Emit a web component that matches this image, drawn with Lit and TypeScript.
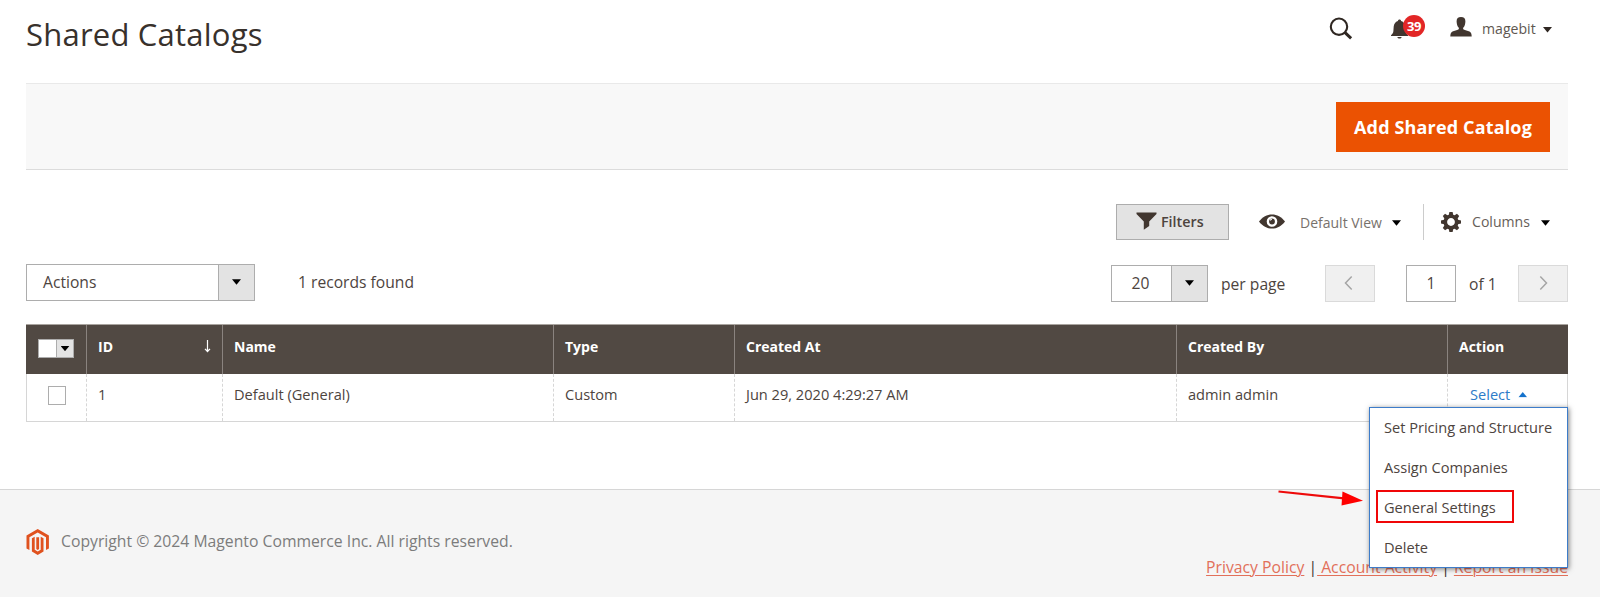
import { LitElement, html, css, svg } from "lit";
import { customElement } from "lit/decorators.js";

const caret = html`<i class="caret"></i>`;

// Gear outline: eight trapezoid teeth around a ring.
const teeth = [0, 45, 90, 135, 180, 225, 270, 315];

@customElement("app-root")
export class AppRoot extends LitElement {
  static styles = css`
    :host {
      display: block;
      position: relative;
      width: 1600px;
      height: 597px;
      overflow: hidden;
      background: #fff;
      color: #4d443e;
      font: 400 15.65px/20px "Open Sans", sans-serif;
    }
    * { box-sizing: border-box; }
    .page { display: flex; flex-direction: column; height: 597px; }
    svg { display: block; flex: none; overflow: visible; }
    .caret {
      display: block; flex: none; width: 9px; height: 5.5px; background: #000;
      clip-path: polygon(0 0, 100% 0, 50% 100%);
    }
    .up { background: #1472cc; transform: scaleY(-1); }
    .head {
      display: flex; justify-content: space-between; height: 83px;
      padding: 0 48px 0 26px;
    }
    h1 {
      margin: 13px 0 0; font-size: 31px; line-height: 42px; font-weight: 400;
      color: #38312c; letter-spacing: 0.22px; white-space: nowrap;
    }
    .tools { display: flex; align-items: flex-start; padding-top: 15px; }
    .search { margin: 2px 38px 0 0; }
    .bell { display: flex; width: 36px; margin-right: 24px; }
    .bell svg { margin-top: 4px; }
    .badge {
      width: 22px; height: 22px; margin: 0 0 0 -4px; border-radius: 11px;
      background: #e22626; color: #fff; font-size: 13px; font-weight: 700;
      line-height: 23px; text-align: center; position: relative; letter-spacing: -0.5px;
    }
    .user { margin: 2px 11px 0 0; }
    .name { margin-top: 4px; width: 61px; font-size: 14.1px; color: #605750; }
    .tools .caret { margin-top: 12px; background: #2f2722; }
    .bar {
      display: flex; justify-content: flex-end; align-items: center; height: 87px;
      margin: 0 32px 0 26px; padding-right: 18px; background: #f8f8f8;
      border-top: 1px solid #e9e9e9; border-bottom: 1px solid #dcdcdc;
    }
    .primary {
      width: 214px; height: 50px; border: 0; padding: 0; background: #eb5202;
      color: #fff; font: 700 18px/50px "Open Sans", sans-serif; letter-spacing: 0.15px;
    }
    .row { display: flex; align-items: center; padding: 0 32px 0 26px; }
    .views { height: 37px; margin-top: 33px; justify-content: flex-end; padding-right: 50px; }
    .filters {
      display: flex; align-items: center; width: 113px; height: 36px; padding: 0 0 0 19px;
      background: #e3e3e3; border: 1px solid #adadad; font-weight: 600; font-size: 14.3px;
    }
    .filters svg { margin-top: -2px; }
    .filters span { margin-left: 4px; }
    .eye { margin-left: 30px; }
    .view { width: 92px; margin-left: 15px; font-size: 14px; color: #77716c; padding-top: 2px; }
    .views .caret { margin-top: 3px; }
    .split { width: 1px; height: 36px; background: #ccc; margin: 0 17px 0 22px; }
    .cols { width: 69px; margin-left: 11px; font-size: 14.1px; color: #665e58; }
    .select {
      display: flex; height: 37px; border: 1px solid #adadad; background: #fff; align-items: center;
    }
    .select b {
      display: flex; align-items: center; justify-content: center; width: 36px; height: 100%;
      background: #e3e3e3; border-left: 1px solid #adadad;
    }
    .select span { flex: 1; }
    .paging { height: 38px; margin-top: 24px; }
    .actions { width: 229px; padding-left: 16px; margin-top: -2px; }
    .actions span { padding-bottom: 1px; }
    .found { margin-left: 43px; flex: 1; padding-bottom: 3px; }
    .size { width: 97px; text-align: center; }
    .size span { padding-right: 2px; }
    .per { width: 104px; margin-left: 13px; padding-top: 1px; }
    .step {
      display: grid; place-items: center; width: 50px; height: 37px; background: #f0f0f0;
      border: 1px solid #dadada;
    }
    .field {
      display: grid; place-items: center; width: 50px; height: 37px; margin: 0 13px 0 31px;
      border: 1px solid #adadad;
    }
    .of { width: 49px; padding-top: 1px; }
    .grid { margin: 22px 32px 0 26px; border: 1px solid #d6d6d6; height: 98px; border-top-color: #a9a49f; }
    .line {
      display: grid; height: 47px;
      grid-template-columns: 59px 136px 331px 181px 442px 271px 1fr;
    }
    .line > div { padding: 10px 0 0 11px; white-space: nowrap; border-left: 1px dashed #d6d6d6; font-size: 14.6px; }
    .line > div:first-child { border-left: 0; }
    .th { background: #514943; color: #fff; height: 50px; margin: -1px -1px 0; padding-left: 1px; padding-right: 1px; border-top: 1px solid #a9a49f; }
    .line.th > div { border-left: 1px solid #8a837f; font-weight: 700; font-size: 14px; padding-top: 12px; }
    .line.th > div:first-child { border-left: 0; padding: 14px 0 0 11px; }
    .mass { display: flex; width: 36px; height: 19px; background: #fff; border: 1px solid #adadad; }
    .mass b { display: grid; place-items: center; width: 17px; margin-left: auto; background: #e3e3e3; border-left: 1px solid #adadad; }
    .id { display: flex; justify-content: space-between; padding-right: 11px !important; }
    .id svg { margin-top: 3px; }
    .line > .check { padding: 12px 0 0 21px; }
    .box { width: 18px; height: 19px; border: 1px solid #adadad; }
    .line > .act { display: flex; padding: 10px 0 0 22px; color: #2d7bc8; }
    .act .caret { margin: 8px 0 0 8px; }
    footer {
      flex: 1; display: flex; justify-content: space-between; margin-top: 67px; padding: 0 32px 0 26px;
      background: #f5f5f5; border-top: 1px solid #d6d6d6; color: #7c7c7c; font-size: 15.74px;
    }
    .copy { display: flex; align-items: flex-start; padding-top: 39px; white-space: nowrap; }
    .copy span { margin-left: 12px; padding-top: 2px; }
    .links { padding-top: 67px; color: #41362f; white-space: pre; }
    .links a { color: #e2705a; text-decoration: underline; text-underline-offset: 2px; text-decoration-thickness: 1px; }
    .menu {
      position: absolute; left: 1369px; top: 407px; width: 199px; height: 161px; padding: 0 0 0 14px;
      background: #fff; border: 1px solid #3d7cc9; box-shadow: 1px 1px 5px rgba(0,0,0,.5);
      line-height: 40px; font-size: 14.6px; white-space: nowrap;
    }
    .menu div:first-child { margin-top: -1px; }
    .mark { position: absolute; left: 1376px; top: 490px; width: 138px; height: 33px; border: 2px solid #f00608; }
    .arrow { position: absolute; left: 1270px; top: 480px; }
    .t { white-space: nowrap; }
  `;

  render() {
    return html`
      <div class="page">
        <div class="head">
          <h1>Shared Catalogs</h1>
          <div class="tools">
            <svg class="search" width="24" height="23" viewBox="0 0 24 23" fill="none" stroke="#2f2722">
              <circle cx="11" cy="9.700" r="8.200" stroke-width="2.100"/>
              <path d="M16.800 15.400l6.300 6" stroke-width="3"/>
            </svg>
            <div class="bell">
              <svg width="17" height="20" viewBox="-1 0 17 20" fill="#41362f">
                <path d="M8.500 0.500c.8 0 1.500.6 1.600 1.400 2.600.8 4 3 4.200 5.600l.3 4.500c.1 1.800.9 3 2.400 4.300v.8H0v-.8c1.500-1.300 2.300-2.500 2.400-4.300l.3-4.500C2.900 4.900 4.300 2.700 6.900 1.900 7 1.100 7.700.5 8.500.5z"/>
                <path d="M6.300 18h4.400c-.4 1-1.100 1.600-2.200 1.600S6.700 19 6.300 18z"/>
              </svg>
              <div class="badge">39</div>
            </div>
            <svg class="user" width="21" height="20" viewBox="-0.500 0 21 20" fill="#41362f">
              <path d="M10.500 0c2.900 0 4.500 1.300 4.400 4.500-.1 2.400-.7 4.700-2 6.100-.5.600-.4 1.600.2 2 1.500.9 4 1.100 5.900 2 1.500.7 2.200 2.300 2.200 4.900H-.2C-.2 16.900.5 15.300 2 14.600c1.900-.9 4.400-1.100 5.900-2 .6-.4.7-1.400.2-2-1.300-1.400-1.900-3.700-2-6.100C6 1.300 7.600 0 10.500 0z"/>
            </svg>
            <div class="name">magebit</div>
            ${caret}
          </div>
        </div>
        <div class="bar"><button class="primary">Add Shared Catalog</button></div>

        <div class="row views">
          <div class="filters">
            <svg width="21" height="18" viewBox="0 0 21 18" fill="#41362f">
              <path d="M.5 0.500h20v1.500L13.200 9.500v4.500L7.800 17.800V9.500L.5 2z"/>
            </svg>
            <span>Filters</span>
          </div>
          <svg class="eye" width="26" height="15" viewBox="0 0 26 15">
            <path d="M0 7.500C3.500 2.800 8 .4 13 .4s9.500 2.400 13 7.100c-3.500 4.700-8 7.100-13 7.100S3.500 12.200 0 7.500z" fill="#41362f"/>
            <circle cx="13" cy="7.500" r="4.100" fill="none" stroke="#fff" stroke-width="2.400"/>
            <path d="M10.800 6.200l2-1" stroke="#fff" stroke-width="1.200"/>
          </svg>
          <div class="view t">Default View</div>
          ${caret}
          <div class="split"></div>
          <svg width="20" height="20" viewBox="-10 -10 20 20">
            ${teeth.map((a) => svg`<path d="M-2.500-6L-1.600-10h3.200L2.500-6z" fill="#41362f" transform="rotate(${a})"/>`)}
            <circle r="5.700" fill="none" stroke="#41362f" stroke-width="3.600"/>
          </svg>
          <div class="cols t">Columns</div>
          ${caret}
        </div>

        <div class="row paging">
          <div class="select actions"><span>Actions</span><b>${caret}</b></div>
          <div class="found t">1 records found</div>
          <div class="select size"><span>20</span><b>${caret}</b></div>
          <div class="per t">per page</div>
          <div class="step">
            <svg width="8" height="14" viewBox="1.500 0 8 14" fill="none" stroke="#a5a5a5" stroke-width="1.500"><path d="M7.200.5L1 7l6.200 6.500"/></svg>
          </div>
          <div class="field">1</div>
          <div class="of t">of 1</div>
          <div class="step">
            <svg width="8" height="14" viewBox="-0.500 0 8 14" fill="none" stroke="#a5a5a5" stroke-width="1.500"><path d="M.8.5L7 7 .8 13.500"/></svg>
          </div>
        </div>

        <div class="grid">
          <div class="line th">
            <div><div class="mass"><b>${caret}</b></div></div>
            <div class="id">ID
              <svg width="7" height="13" viewBox="0 0 7 13" fill="none" stroke="#fff" stroke-width="1.200"><path d="M3.500 0v11M1 8.800l2.500 2.700L6 8.800"/></svg>
            </div>
            <div>Name</div><div>Type</div><div>Created At</div><div>Created By</div><div>Action</div>
          </div>
          <div class="line">
            <div class="check"><div class="box"></div></div>
            <div>1</div><div>Default (General)</div><div>Custom</div>
            <div>Jun 29, 2020 4:29:27 AM</div><div>admin admin</div>
            <div class="act">Select <i class="caret up"></i></div>
          </div>
        </div>

        <footer>
          <div class="copy">
            <svg width="23" height="26" viewBox="-0.500 0 23 26" fill="#e0521f">
              <path d="M11.200 0L22.400 6.500v12.900l-2.900 1.700V8.200l-8.300-4.800-8.300 4.800v12.900L0 19.400V6.500z"/>
              <path d="M5.400 9.300l2.800-1.600v13l3 1.800 3-1.800v-13l2.800 1.600v13.300L11.200 26l-5.800-3.400z"/>
              <path d="M9.800 8.200h2.800v11.800l-1.400.9-1.400-.9z"/>
            </svg>
            <span>Copyright © 2024 Magento Commerce Inc. All rights reserved.</span>
          </div>
          <div class="links"><a>Privacy Policy</a> |<a> Account Activity</a> | <a>Report an Issue</a></div>
        </footer>
      </div>

      <div class="menu">
        <div>Set Pricing and Structure</div>
        <div>Assign Companies</div>
        <div>General Settings</div>
        <div>Delete</div>
      </div>
      <div class="mark"></div>
      <svg class="arrow" width="100" height="30" viewBox="0 0 100 30">
        <path d="M8.500 11.500L74 18.300" stroke="#ee0a0a" stroke-width="2.200"/>
        <path d="M72.500 11.500L93 20.800 71.500 25.500z" fill="#f00"/>
      </svg>
    `;
  }
}
